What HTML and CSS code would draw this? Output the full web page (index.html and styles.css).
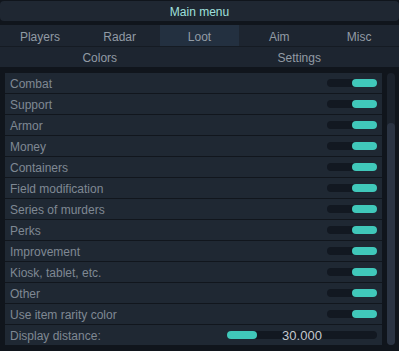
FILE: index.html
```html
<!DOCTYPE html>
<html>
<head>
    <meta charset="UTF-8">
    <title>Main menu</title>
    <link rel="stylesheet" href="styles.css">
</head>
<body>
    <div class="title">Main menu</div>

    <div class="tabs">
        <div class="tab">Players</div>
        <div class="tab">Radar</div>
        <div class="tab active">Loot</div>
        <div class="tab">Aim</div>
        <div class="tab">Misc</div>
    </div>
    <div class="subtabs">
        <div class="tab">Colors</div>
        <div class="tab">Settings</div>
    </div>

    <div class="content">
        <div class="list">
            <div class="row"><span>Combat</span><div class="toggle"><div class="knob"></div></div></div>
            <div class="row"><span>Support</span><div class="toggle"><div class="knob"></div></div></div>
            <div class="row"><span>Armor</span><div class="toggle"><div class="knob"></div></div></div>
            <div class="row"><span>Money</span><div class="toggle"><div class="knob"></div></div></div>
            <div class="row"><span>Containers</span><div class="toggle"><div class="knob"></div></div></div>
            <div class="row"><span>Field modification</span><div class="toggle"><div class="knob"></div></div></div>
            <div class="row"><span>Series of murders</span><div class="toggle"><div class="knob"></div></div></div>
            <div class="row"><span>Perks</span><div class="toggle"><div class="knob"></div></div></div>
            <div class="row"><span>Improvement</span><div class="toggle"><div class="knob"></div></div></div>
            <div class="row"><span>Kiosk, tablet, etc.</span><div class="toggle"><div class="knob"></div></div></div>
            <div class="row"><span>Other</span><div class="toggle"><div class="knob"></div></div></div>
            <div class="row"><span>Use item rarity color</span><div class="toggle"><div class="knob"></div></div></div>
            <div class="row last">
                <span>Display distance:</span>
                <div class="slider">
                    <div class="fill" style="width: 30px"></div>
                    <div class="value">30.000</div>
                </div>
            </div>
        </div>
        <div class="scrollbar">
            <div class="thumb"></div>
        </div>
    </div>
</body>
</html>
```

FILE: styles.css
```css
body {
    margin: 0;
    background-color: #10151c;
    font-family: "Liberation Sans", Arial, sans-serif;
    font-size: 12px;
}

.title {
    margin-top: 1px;
    height: 19px;
    padding-top: 1px;
    line-height: 20px;
    border-radius: 4px;
    background-color: #1f2732;
    color: #9fe0dc;
    text-align: center;
}

.tabs {
    display: grid;
    grid-template-columns: repeat(5, 1fr);
    margin-top: 4px;
    height: 21px;
    background-color: #1d2530;
    border-bottom: 1px solid #151b23;
}

.subtabs {
    display: grid;
    grid-template-columns: 1fr 1fr;
    height: 20px;
    background-color: #1d2530;
}

.tab {
    display: flex;
    justify-content: center;
    align-items: center;
    padding-top: 2px;
    color: #929ba5;
}

.tab.active {
    background-color: #233040;
}

.content {
    display: flex;
    gap: 5px;
    margin-top: 6px;
    padding-left: 5px;
}

.list {
    width: 377px;
}

.row {
    display: flex;
    justify-content: space-between;
    align-items: center;
    height: 20px;
    padding-left: 5px;
    padding-right: 5px;
    background-color: #1f2833;
    border-bottom: 1px solid #11161d;
    color: #7f8893;
}

.row span {
    padding-top: 2px;
}

.row.last {
    border-bottom: none;
}

.toggle {
    display: flex;
    justify-content: flex-end;
    width: 50px;
    height: 8px;
    border-radius: 4px;
    background-color: #121821;
}

.knob {
    width: 25px;
    height: 8px;
    border-radius: 4px;
    background-color: #40c8ba;
}

.slider {
    position: relative;
    width: 150px;
    height: 8px;
    border-radius: 4px;
    background-color: #121821;
}

.fill {
    height: 8px;
    border-radius: 4px;
    background-color: #40c8ba;
}

.value {
    position: absolute;
    left: 0;
    right: 0;
    top: -3px;
    line-height: 16px;
    text-align: center;
    color: #c4c9cf;
    font-size: 13px;
}

.scrollbar {
    display: flex;
    flex-direction: column;
    justify-content: flex-end;
    width: 8px;
    height: 272px;
    border-radius: 4px;
    background-color: #1b222c;
}

.thumb {
    height: 222px;
    border-radius: 4px;
    background-color: #2b3443;
}
```
